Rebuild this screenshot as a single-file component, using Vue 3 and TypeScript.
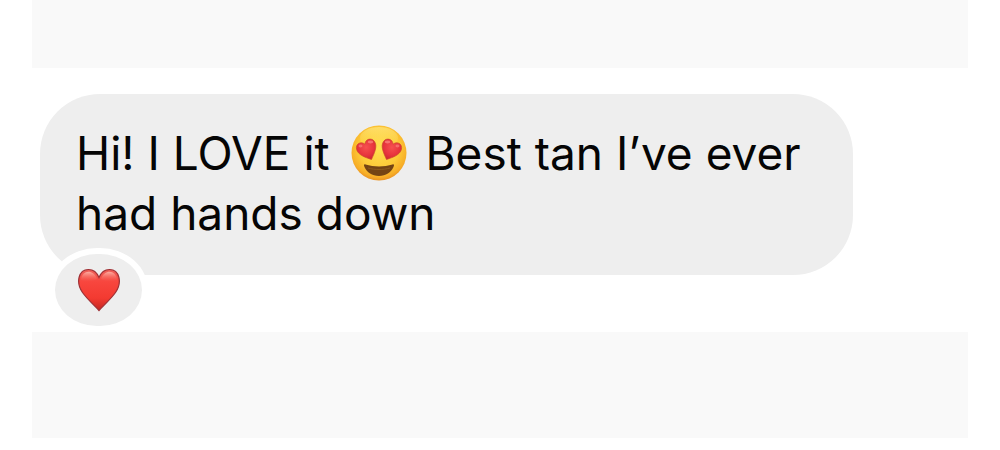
<script setup lang="ts">
interface Message {
  before: string
  after: string[]
}

const message: Message = {
  before: 'Hi! I LOVE it',
  after: ['Best tan I’ve ever', 'had hands down'],
}
</script>

<template>
  <main class="page">
    <div class="band band-top"></div>
    <section class="thread">
      <article class="bubble">
        <p class="text">
          <span>{{ message.before }}</span>
          {{ ' ' }}
          <svg class="emoji" viewBox="0 0 56 56" role="img" aria-label="Smiling face with heart eyes">
            <defs>
              <radialGradient id="face" cx="50%" cy="42%" r="60%">
                <stop offset="0" stop-color="#ffe04f" />
                <stop offset="0.6" stop-color="#fdca38" />
                <stop offset="0.86" stop-color="#f7ae27" />
                <stop offset="1" stop-color="#e58a22" />
              </radialGradient>
              <linearGradient id="shine" x1="0" y1="0" x2="0" y2="1">
                <stop offset="0" stop-color="#ffec8a" stop-opacity="0.6" />
                <stop offset="1" stop-color="#ffe15c" stop-opacity="0" />
              </linearGradient>
              <radialGradient id="eye" cx="50%" cy="40%" r="65%">
                <stop offset="0" stop-color="#f6504f" />
                <stop offset="0.6" stop-color="#e8353e" />
                <stop offset="1" stop-color="#c92630" />
              </radialGradient>
            </defs>
            <circle cx="28" cy="28" r="27.500" fill="url(#face)" />
            <ellipse cx="28" cy="13" rx="19" ry="11" fill="url(#shine)" />
            <path
              d="M14.500 39.500C23 42 33 42 41.500 39.500C43 39 43.500 40 42.500 42C40 47.500 35 51 28 51S16 47.500 13.500 42C12.500 40 13 39 14.500 39.500Z"
              fill="#744414"
            />
            <path d="M17 43C24 45 32 45 39 43" fill="none" stroke="#8c5a1d" stroke-width="1" />
            <path
              d="M20.500 34.500C14.500 32.500 7 30 5.600 24.500C4.300 19 9.500 15.800 14 19.200C14.200 14 20.500 12.200 23.500 16.500C27 21.500 22.800 29 20.500 34.500Z"
              fill="url(#eye)"
              stroke="#cf4b2c"
              stroke-width="0.700"
            />
            <path
              d="M35.500 34.500C41.500 32.500 49 30 50.400 24.500C51.700 19 46.500 15.800 42 19.200C41.800 14 35.500 12.200 32.500 16.500C29 21.500 33.200 29 35.500 34.500Z"
              fill="url(#eye)"
              stroke="#cf4b2c"
              stroke-width="0.700"
            />
            <ellipse cx="19.500" cy="17" rx="2.800" ry="1.400" fill="#ff9b90" opacity="0.6" />
            <ellipse cx="36.500" cy="17" rx="2.800" ry="1.400" fill="#ff9b90" opacity="0.6" />
            <ellipse cx="9.500" cy="21" rx="2" ry="1.400" fill="#ff9b90" opacity="0.5" />
            <ellipse cx="46.500" cy="21" rx="2" ry="1.400" fill="#ff9b90" opacity="0.5" />
          </svg>
          <template v-for="part in message.after" :key="part">
            {{ ' ' }}<span>{{ part }}</span>
          </template>
        </p>
        <button class="reaction" type="button" aria-label="Heart reaction">
          <svg class="heart" viewBox="0 0 44 44" aria-hidden="true">
            <defs>
              <linearGradient id="heart-fill" x1="0" y1="0" x2="0" y2="1">
                <stop offset="0" stop-color="#ee625c" />
                <stop offset="0.300" stop-color="#f8463e" />
                <stop offset="0.700" stop-color="#f33a31" />
                <stop offset="1" stop-color="#c22722" />
              </linearGradient>
              <linearGradient id="gloss" x1="0" y1="0" x2="0" y2="1">
                <stop offset="0" stop-color="#ffc0b4" stop-opacity="0.8" />
                <stop offset="1" stop-color="#ff6a5c" stop-opacity="0" />
              </linearGradient>
            </defs>
            <path
              d="M22 42.500C18 38 10.500 31.500 5.500 24.500C-1.500 14.500 1.500 1.500 11.500 1.500C16.500 1.500 20 4.500 22 9.500C24 4.500 27.500 1.500 32.500 1.500C42.500 1.500 45.500 14.500 38.500 24.500C33.500 31.500 26 38 22 42.500Z"
              fill="url(#heart-fill)"
              stroke="#9e3035"
              stroke-width="1.200"
            />
            <path d="M4 12C5 1.500 16.500 1 20 11C15 14 9 14 4 12Z" fill="url(#gloss)" />
            <path d="M40 12C39 1.500 27.500 1 24 11C29 14 35 14 40 12Z" fill="url(#gloss)" />
          </svg>
        </button>
      </article>
    </section>
    <div class="band band-bottom"></div>
  </main>
</template>

<style>
body {
  margin: 0;
  background: #fff;
}
</style>

<style scoped>
.page {
  box-sizing: border-box;
  display: flex;
  flex-direction: column;
  min-height: 100vh;
  padding: 0 32px 12px;
  font-family: Inter, "Liberation Sans", sans-serif;
}

.band {
  background: #f9f9f9;
}

.band-top {
  height: 68px;
}

.band-bottom {
  flex: 1;
}

.thread {
  padding: 26px 8px 57px;
}

.bubble {
  position: relative;
  box-sizing: border-box;
  max-width: 813px;
  padding: 29px 36px 32px;
  border-radius: 60px;
  background: #eee;
}

.text {
  margin: 0;
  color: #050505;
  font-size: 46px;
  line-height: 60px;
}

.emoji {
  width: 56px;
  height: 56px;
  margin: 0 6px 0 8px;
  vertical-align: -11px;
}

.reaction {
  position: absolute;
  left: 9px;
  bottom: -57px;
  display: flex;
  align-items: center;
  justify-content: center;
  box-sizing: content-box;
  width: 87px;
  height: 72px;
  padding: 0;
  border: 6px solid #fff;
  border-radius: 48px / 42px;
  background: #eee;
}

.heart {
  width: 44px;
  height: 44px;
}
</style>
